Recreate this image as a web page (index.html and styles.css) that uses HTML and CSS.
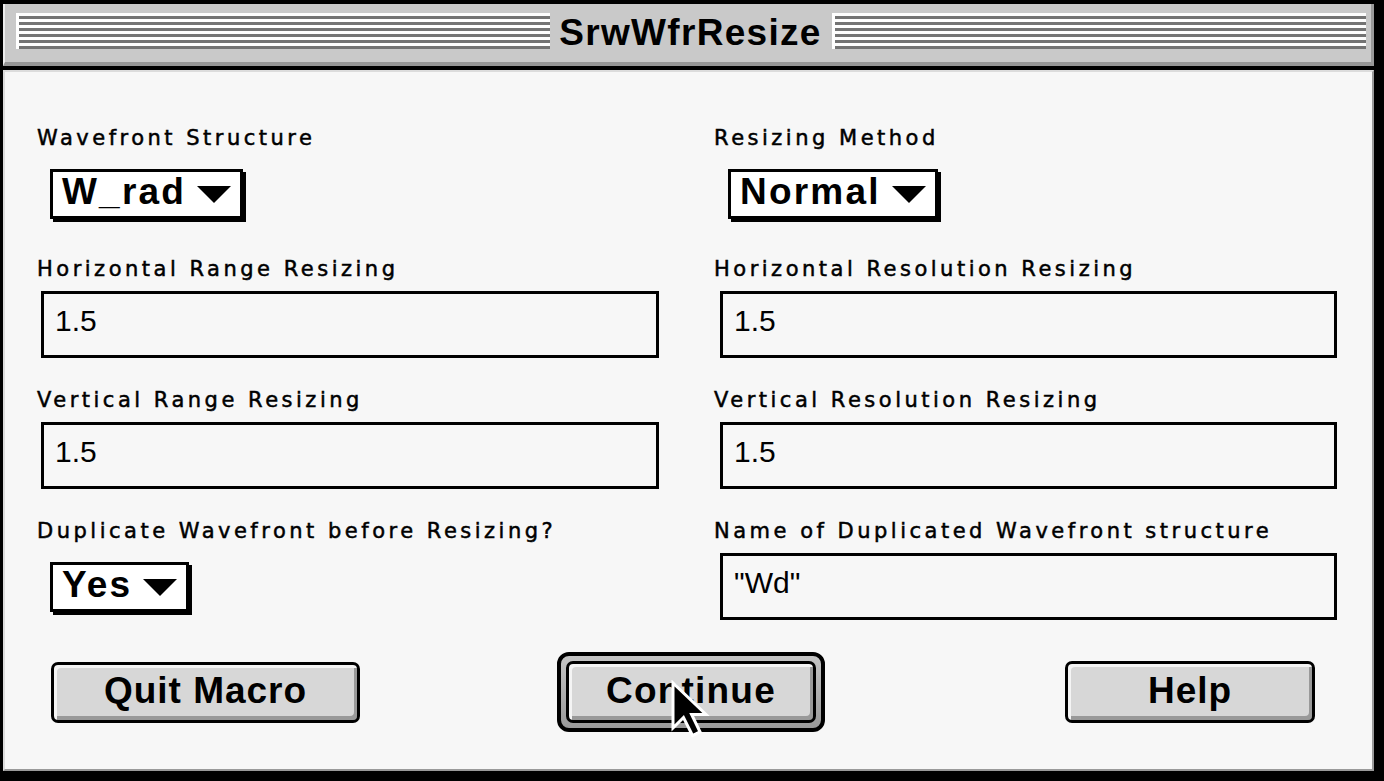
FILE: index.html
```html
<!DOCTYPE html>
<html>
<head>
<meta charset="utf-8">
<title>SrwWfrResize</title>
<link rel="stylesheet" href="styles.css">
</head>
<body>
<div class="window">
  <div class="titlebar">
    <div class="stripes"></div>
    <div class="title">SrwWfrResize</div>
    <div class="stripes"></div>
  </div>
  <div class="sep"></div>
  <div class="content">
    <div class="grid">
      <div class="cell">
        <div class="label">Wavefront Structure</div>
        <div class="popup"><span class="ptext">W_rad</span><i class="tri"></i></div>
      </div>
      <div class="cell right">
        <div class="label">Resizing Method</div>
        <div class="popup"><span class="ptext">Normal</span><i class="tri"></i></div>
      </div>
      <div class="cell">
        <div class="label">Horizontal Range Resizing</div>
        <div class="field">1.5</div>
      </div>
      <div class="cell right">
        <div class="label">Horizontal Resolution Resizing</div>
        <div class="field">1.5</div>
      </div>
      <div class="cell">
        <div class="label">Vertical Range Resizing</div>
        <div class="field">1.5</div>
      </div>
      <div class="cell right">
        <div class="label">Vertical Resolution Resizing</div>
        <div class="field">1.5</div>
      </div>
      <div class="cell">
        <div class="label">Duplicate Wavefront before Resizing?</div>
        <div class="popup"><span class="ptext">Yes</span><i class="tri"></i></div>
      </div>
      <div class="cell right">
        <div class="label">Name of Duplicated Wavefront structure</div>
        <div class="field">"Wd"</div>
      </div>
    </div>
    <div class="buttons">
      <div class="btn quit">Quit Macro</div>
      <div class="ring"><div class="btn cont">Continue</div></div>
      <div class="btn help">Help</div>
    </div>
  </div>
</div>
<svg class="cursor" width="42" height="60" viewBox="0 0 14 20">
  <polygon points="1,1 1,16 4.5,12.5 7.5,18.5 10,17.3 7.2,11.5 12,11.5" fill="#000" stroke="#fff" stroke-width="1" stroke-linejoin="miter"/>
</svg>
</body>
</html>
```

FILE: styles.css
```css
html, body {
  margin: 0;
  padding: 0;
  background: #000;
}

.window {
  width: 1384px;
  height: 781px;
  box-sizing: border-box;
  border-top: 4px solid #000;
  border-left: 3px solid #000;
  border-right: 10px solid #000;
  border-bottom: 10px solid #000;
  display: flex;
  flex-direction: column;
  background: #f7f7f7;
}

.titlebar {
  height: 62px;
  box-sizing: border-box;
  background: #c9c9c9;
  border-left: 2px solid #ececec;
  border-right: 3px solid #9a9a9a;
  border-bottom: 4px solid #969696;
  display: flex;
  align-items: flex-start;
  padding: 0 5px 0 11px;
}

.stripes {
  flex: 1;
  height: 36px;
  margin-top: 9px;
  box-sizing: border-box;
  border-left: 3px solid #fff;
  background: repeating-linear-gradient(to bottom, #fdfdfd 0, #fdfdfd 3px, #737373 3px, #737373 6px);
}

.title {
  height: 58px;
  line-height: 58px;
  padding: 0 10px 0 9px;
  font-family: "Liberation Sans", Arial, sans-serif;
  font-weight: bold;
  font-size: 37px;
  letter-spacing: 1.3px;
  color: #000;
  white-space: nowrap;
}

.sep {
  height: 4px;
  background: #000;
}

.content {
  flex: 1;
  box-sizing: border-box;
  border-top: 2px solid #dcdcdc;
  border-left: 2px solid #dcdcdc;
  border-right: 2px solid #9a9a9a;
  border-bottom: 2px solid #9a9a9a;
  background: #f7f7f7;
}

.grid {
  display: grid;
  grid-template-columns: 622px 623px;
  grid-auto-rows: 131px;
  column-gap: 55px;
  padding-top: 51px;
  margin-left: 32px;
}

.cell {
  display: flex;
  flex-direction: column;
  align-items: flex-start;
}

.label {
  height: 30px;
  line-height: 30px;
  font-family: "DejaVu Sans", sans-serif;
  font-size: 21px;
  letter-spacing: 3.5px;
  -webkit-text-stroke: 0.5px #000;
  color: #000;
  white-space: nowrap;
}

.popup {
  display: inline-flex;
  align-items: center;
  height: 50px;
  box-sizing: border-box;
  border: 3px solid #000;
  background: #fff;
  box-shadow: 3px 3px 0 #000;
  margin-top: 16px;
  margin-left: 13px;
  padding: 0 9px 0 9px;
  font-family: "Liberation Sans", Arial, sans-serif;
  font-weight: bold;
  font-size: 37px;
  letter-spacing: 2.2px;
  color: #000;
}

.right .popup {
  margin-left: 14px;
}

.ptext {
  line-height: 40px;
  padding-bottom: 4px;
}

.tri {
  display: block;
  width: 0;
  height: 0;
  margin-left: 11px;
  border-left: 17px solid transparent;
  border-right: 17px solid transparent;
  border-top: 17px solid #000;
}

.field {
  margin-top: 7px;
  margin-left: 4px;
  width: 618px;
  height: 67px;
  box-sizing: border-box;
  border: 3px solid #000;
  background: #f7f7f7;
  padding: 10px 11px 0;
  font-family: "Liberation Sans", Arial, sans-serif;
  font-size: 30px;
  line-height: 34px;
  color: #000;
}

.right .field {
  margin-left: 6px;
  width: 617px;
}

.buttons {
  display: flex;
  align-items: center;
  height: 80px;
  margin-top: 5px;
}

.btn {
  box-sizing: border-box;
  height: 62px;
  border: 3px solid #000;
  border-radius: 7px;
  background: #d7d7d7;
  box-shadow: inset 3px 3px 0 #f4f4f4, inset -3px -4px 0 #999;
  display: flex;
  align-items: center;
  justify-content: center;
  padding-bottom: 2px;
  font-family: "Liberation Sans", Arial, sans-serif;
  font-weight: bold;
  font-size: 37px;
  letter-spacing: 1px;
  color: #000;
}

.quit {
  width: 309px;
  height: 61px;
  margin-left: 46px;
}

.ring {
  box-sizing: border-box;
  width: 268px;
  height: 80px;
  margin-left: 197px;
  border: 4px solid #000;
  border-radius: 12px;
  padding: 5px;
  background: linear-gradient(to bottom, #c4c4c4, #9a9a9a);
}

.cont {
  width: 100%;
  height: 100%;
  letter-spacing: 1.2px;
}

.help {
  width: 250px;
  margin-left: 240px;
}

.cursor {
  position: absolute;
  left: 670px;
  top: 680px;
}
```
